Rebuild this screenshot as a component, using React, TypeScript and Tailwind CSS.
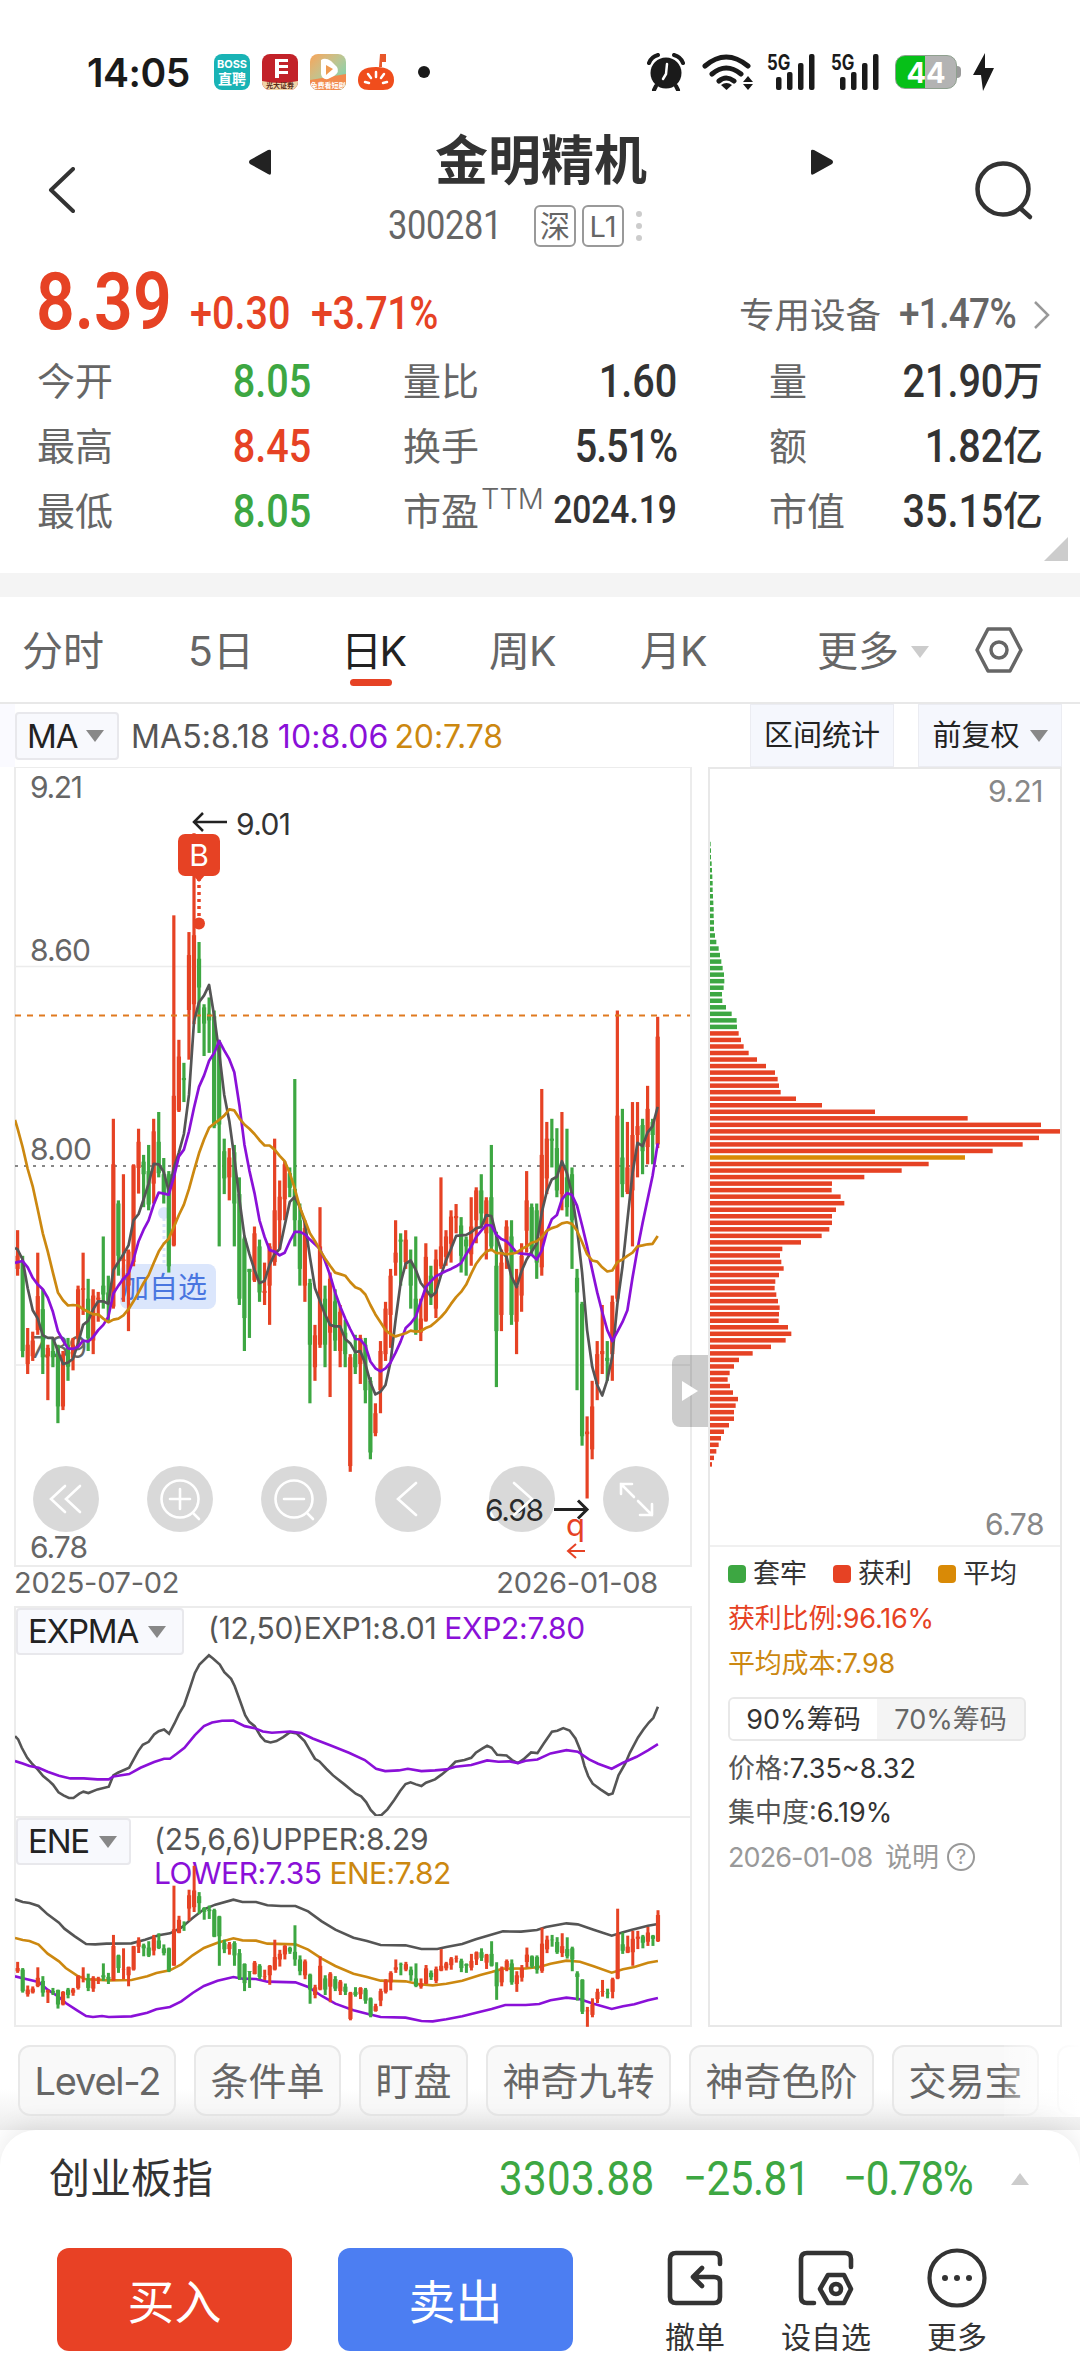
import type { ReactNode } from "react";

const RED = "#e64224";
const GREEN = "#3da742";
const GOLD = "#cc8810";
const PURPLE = "#8a10d8";
const DARK = "#555555";

// [high, low, body top, body bottom, rising]
const candles: number[][] = [
  [899, 986, 948, 973, 1], [948, 1142, 960, 1130, 0], [1086, 1174, 1118, 1155, 1], [1093, 1149, 1110, 1140, 1],
  [942, 1099, 1025, 1090, 1], [1012, 1174, 1050, 1142, 0], [1118, 1224, 1124, 1140, 1], [1105, 1161, 1130, 1142, 0],
  [1118, 1268, 1122, 1236, 0], [1130, 1243, 1137, 1236, 1], [1105, 1187, 1118, 1160, 0], [1105, 1167, 1118, 1143, 1],
  [1005, 1118, 1012, 1105, 1], [942, 1061, 1010, 1013, 1], [992, 1130, 1030, 1105, 0], [1012, 1136, 1024, 1110, 1],
  [1017, 1074, 1028, 1032, 1], [911, 1049, 1005, 1022, 0], [986, 1074, 1018, 1040, 0], [686, 1049, 773, 1045, 1],
  [842, 986, 848, 948, 0], [792, 1036, 955, 958, 1], [936, 1092, 940, 1005, 1], [773, 968, 775, 960, 1],
  [705, 829, 730, 780, 1], [755, 855, 768, 792, 0], [736, 861, 786, 850, 0], [686, 848, 710, 810, 1],
  [673, 798, 730, 790, 0], [761, 848, 792, 830, 0], [786, 980, 792, 968, 0], [297, 930, 642, 928, 1],
  [535, 673, 567, 670, 1], [579, 654, 608, 612, 0], [329, 573, 373, 478, 1], [140, 505, 335, 467, 1],
  [348, 522, 380, 435, 0], [467, 566, 473, 504, 0], [454, 560, 485, 498, 0], [479, 704, 490, 700, 0],
  [535, 930, 540, 697, 0], [724, 830, 748, 800, 0], [742, 842, 760, 798, 1], [736, 930, 750, 848, 0],
  [798, 1042, 830, 1030, 0], [911, 1130, 915, 1067, 0], [973, 1105, 973, 979, 0], [892, 998, 905, 995, 1],
  [917, 1036, 930, 1018, 0], [961, 1042, 1015, 1019, 1], [924, 1080, 930, 1005, 1], [724, 967, 861, 960, 1],
  [804, 936, 835, 880, 1], [767, 880, 773, 840, 1], [779, 836, 790, 818, 0], [610, 930, 820, 880, 0],
  [848, 1005, 880, 973, 0], [880, 1036, 895, 1005, 1], [992, 1230, 1000, 1118, 0], [1080, 1187, 1100, 1161, 1],
  [855, 1124, 930, 1118, 1], [1005, 1161, 1030, 1118, 0], [980, 1218, 992, 1095, 1], [1012, 1130, 1035, 1110, 0],
  [1042, 1161, 1055, 1130, 1], [1070, 1161, 1095, 1136, 0], [1136, 1361, 1142, 1350, 1], [1099, 1174, 1136, 1161, 0],
  [1099, 1193, 1105, 1155, 1], [1105, 1230, 1118, 1205, 0], [1180, 1337, 1187, 1324, 0], [1230, 1293, 1249, 1287, 1],
  [1111, 1249, 1130, 1205, 1], [1036, 1149, 1049, 1136, 1], [973, 1124, 986, 1061, 1], [880, 986, 942, 961, 1],
  [905, 1005, 917, 921, 0], [899, 973, 917, 960, 1], [936, 1049, 961, 1005, 0], [911, 1099, 1030, 1090, 0],
  [1030, 1111, 1068, 1095, 1], [924, 1074, 950, 1072, 1], [967, 1042, 986, 1020, 0], [936, 1067, 955, 1049, 1],
  [798, 973, 930, 968, 1], [899, 967, 911, 950, 1], [861, 961, 873, 925, 1], [849, 905, 872, 876, 1],
  [874, 980, 890, 948, 0], [911, 986, 917, 930, 0], [836, 967, 892, 945, 1], [817, 924, 823, 880, 1],
  [792, 892, 823, 867, 0], [836, 955, 842, 905, 1], [736, 936, 836, 930, 0], [902, 1199, 967, 1092, 0],
  [936, 1092, 961, 1061, 1], [880, 973, 892, 940, 1], [880, 1080, 911, 1061, 0], [973, 1136, 1005, 1074, 1],
  [924, 1055, 948, 1024, 1], [786, 942, 842, 900, 1], [848, 948, 855, 935, 0], [848, 992, 861, 961, 0],
  [629, 986, 755, 970, 1], [692, 830, 724, 800, 1], [686, 779, 724, 728, 0], [704, 836, 742, 823, 0],
  [673, 861, 775, 830, 1], [705, 873, 798, 855, 0], [779, 973, 792, 880, 0], [973, 1205, 990, 1018, 0],
  [1036, 1311, 1040, 1293, 0], [1255, 1412, 1284, 1289, 1], [1187, 1337, 1236, 1318, 1], [1111, 1224, 1136, 1193, 1],
  [1042, 1174, 1130, 1136, 1], [1111, 1187, 1143, 1149, 0], [1024, 1187, 1036, 1136, 1], [479, 1036, 680, 1030, 1],
  [667, 836, 760, 811, 0], [692, 830, 779, 826, 1], [654, 930, 717, 823, 1], [654, 798, 700, 717, 1],
  [686, 792, 698, 748, 0], [623, 773, 667, 740, 1], [686, 773, 692, 717, 0], [491, 742, 529, 735, 1],
];

const ma5 = [
  936, 955, 1010, 1052, 1068, 1100, 1105, 1105, 1130, 1155, 1152, 1145, 1115, 1080, 1072, 1050, 1035, 1035, 1040, 975,
  960, 945, 928, 880, 868, 840, 810, 772, 773, 788, 825, 780, 750, 715, 640, 500, 463, 450, 430, 490,
  560, 640, 690, 760, 840, 910, 945, 975, 1000, 996, 965, 945, 935, 890, 845, 835, 855, 885, 950, 1010,
  1035, 1060, 1080, 1083, 1083, 1107, 1115, 1132, 1130, 1155, 1190, 1213, 1208, 1195, 1150, 1070, 1000, 963, 957, 975,
  1000, 1012, 1026, 1018, 985, 957, 935, 910, 909, 908, 903, 895, 893, 870, 872, 910, 940, 950, 988, 1008,
  977, 955, 940, 925, 865, 825, 802, 797, 767, 790, 830, 895, 980, 1090, 1160, 1195, 1215, 1185, 1140, 1040,
  970, 880, 790, 732, 738, 712, 700, 663,
];

const ma10 = [
  960, 958, 970, 990, 1003, 1012, 1028, 1055, 1092, 1110, 1125, 1126, 1122, 1110, 1112, 1103, 1090, 1080, 1065, 1020,
  1005, 992, 982, 955, 920, 898, 880, 850, 827, 829, 831, 798, 758, 745, 710, 665, 625, 603, 575, 560,
  537, 555, 572, 597, 660, 735, 785, 828, 880, 912, 937, 940, 947, 942, 920, 902, 902, 907, 917, 926,
  935, 958, 985, 1018, 1045, 1068, 1088, 1107, 1108, 1120, 1150, 1163, 1169, 1163, 1152, 1133, 1112, 1086, 1077, 1064,
  1036, 1008, 997, 987, 982, 977, 973, 968, 962, 945, 930, 912, 900, 889, 890, 908, 916, 920, 930, 942,
  944, 945, 946, 955, 938, 902, 878, 870, 840, 828, 832, 852, 890, 930, 975, 1018, 1055, 1090, 1111, 1093,
  1075, 1052, 990, 935, 885, 840, 795, 733,
];

const ma20 = [
  705, 740, 782, 815, 860, 905, 940, 980, 1018, 1033, 1043, 1042, 1043, 1050, 1055, 1060, 1060, 1068, 1075, 1070,
  1068, 1062, 1050, 1035, 1018, 1000, 985, 962, 940, 925, 915, 893, 870, 850, 820, 785, 752, 725, 703, 695,
  688, 680, 668, 670, 685, 697, 705, 715, 727, 737, 737, 745, 757, 767, 790, 820, 855, 880, 905, 920,
  937, 953, 967, 980, 983, 986, 998, 1008, 1012, 1022, 1042, 1060, 1075, 1090, 1098, 1102, 1099, 1096, 1091, 1093,
  1092, 1086, 1082, 1074, 1065, 1054, 1040, 1027, 1017, 1003, 982, 963, 950, 940, 936, 943, 943, 945, 944, 942,
  935, 930, 923, 920, 912, 900, 895, 892, 886, 884, 887, 900, 922, 945, 957, 959, 970, 978, 976, 960,
  955, 948, 942, 930, 928, 926, 925, 910,
];

// cost distribution, one width per price level
const chips = [
  2, 3, 3, 5, 6, 7, 8, 8, 9, 10, 11, 11, 12, 12, 15, 19, 26, 30, 34, 38, 42, 43, 41, 36, 37, 48, 65, 80, 81,
  86, 93, 101, 116, 141, 168, 195, 203, 207, 212, 258, 336, 495, 773, 993, 1050, 987, 938, 848, 765, 656, 575, 463,
  366, 365, 392, 403, 378, 366, 366, 358, 335, 273, 217, 210, 214, 221, 207, 196, 194, 199, 204, 209, 207, 206,
  234, 244, 227, 183, 128, 87, 72, 59, 53, 60, 69, 84, 77, 72, 72, 57, 42, 33, 26, 19, 12, 6,
];
const AVG_ROW = 48;
const FIRST_PROFIT_ROW = 29;

const exp1 =
  "33,530 40,540 48,565 60,595 70,612 83,630 95,650 107,663 117,676 129,699 140,708 152,716 162,716 175,703 184,697 195,701 215,690 240,682 250,648 260,640 285,625 305,575 315,556 328,547 340,525 350,515 362,510 373,523 385,492 395,463 406,438 418,390 430,340 440,315 461,287 470,297 485,315 495,338 510,358 518,380 530,425 541,467 550,487 562,500 575,530 585,545 597,549 610,545 625,533 640,518 655,522 672,545 685,575 695,598 705,606 720,628 735,648 760,675 785,703 797,711 808,728 818,752 830,769 842,767 855,750 870,722 883,695 895,674 906,669 918,675 930,680 940,670 960,660 975,645 990,628 1005,607 1025,602 1040,595 1050,580 1065,567 1075,559 1085,565 1097,586 1118,588 1130,602 1143,611 1155,600 1172,579 1186,581 1200,552 1218,517 1230,514 1243,506 1257,513 1270,537 1280,570 1290,620 1298,650 1308,673 1325,690 1343,706 1352,702 1365,648 1380,612 1390,580 1408,534 1420,510 1432,489 1442,475 1452,442";
const exp2 =
  "33,605 50,612 65,620 85,625 105,637 130,649 155,657 185,657 215,660 240,660 250,651 285,644 310,625 340,608 362,598 375,598 390,583 407,565 430,527 450,500 468,489 490,484 515,483 540,500 562,506 580,516 600,520 640,516 665,521 690,537 730,558 770,580 805,602 830,628 850,635 880,633 900,628 930,635 960,633 985,630 1005,622 1040,617 1075,603 1100,607 1125,606 1143,611 1160,604 1186,600 1215,582 1250,572 1275,577 1300,600 1320,613 1350,628 1375,610 1405,592 1430,573 1452,554";
const upper =
  "33,267 50,275 65,278 85,287 105,312 130,337 142,355 165,378 190,401 210,402 235,400 290,399 320,388 350,375 375,369 400,352 425,323 450,297 475,283 515,268 535,275 565,275 590,285 620,287 652,287 680,303 710,333 740,358 780,382 810,392 840,404 895,405 930,416 965,416 985,410 1020,401 1050,387 1080,375 1110,363 1150,364 1185,359 1205,350 1250,339 1275,342 1310,358 1350,376 1375,366 1395,358 1430,346 1452,341";
const middle =
  "33,383 50,389 65,392 85,403 105,430 130,453 145,473 170,496 190,507 210,508 240,510 290,509 325,498 345,488 375,480 400,462 425,435 450,413 480,397 515,384 535,390 565,391 590,400 652,402 680,418 710,445 740,467 780,490 810,500 840,511 895,513 925,522 955,525 985,520 1020,511 1060,494 1085,485 1110,475 1160,474 1190,470 1215,460 1250,451 1280,454 1310,468 1350,487 1375,477 1400,470 1430,457 1452,452";
const lower =
  "33,498 50,504 85,515 105,538 130,560 145,578 170,600 190,617 205,620 225,617 240,620 290,618 325,607 345,597 375,590 400,573 425,548 450,527 480,511 515,500 535,505 565,506 590,514 652,516 680,530 710,557 740,580 780,600 810,610 840,620 895,622 930,632 955,633 985,627 1020,618 1060,604 1085,596 1115,584 1160,584 1190,581 1215,570 1250,562 1280,567 1310,580 1350,596 1375,588 1400,582 1430,570 1452,563";

const cx = (i: number) => 17.6 + 5.04 * i;
const cy = (v: number) => 760 + v / 1.912;
const line = (values: number[]) => values.map((v, i) => `${cx(i).toFixed(1)},${cy(v).toFixed(1)}`).join(" ");

function Num({ children, className = "" }: { children: ReactNode; className?: string }) {
  return (
    <span className={`inline-block whitespace-nowrap font-['Roboto'] leading-none scale-x-[.86] ${className}`}>
      {children}
    </span>
  );
}

function Caret({ className = "" }: { className?: string }) {
  return (
    <svg viewBox="0 0 18 12" className={`h-3 w-[18px] shrink-0 ${className}`} fill="currentColor">
      <path d="M0 0h18L9 12z" />
    </svg>
  );
}

function Signal() {
  return (
    <div className="relative h-9 w-12">
      <span className="absolute top-0 left-0 text-[21px] leading-[17px] font-bold scale-x-[.8] origin-left">5G</span>
      <svg viewBox="0 0 48 36" className="absolute inset-0" fill="#1a1a1a">
        <rect x="9" y="23" width="5.500" height="13" rx="2" />
        <rect x="20" y="18" width="5.500" height="18" rx="2" />
        <rect x="31" y="9" width="5.500" height="27" rx="2" />
        <rect x="42" y="0" width="5.500" height="36" rx="2" />
      </svg>
    </div>
  );
}

function StatusBar() {
  return (
    <div className="flex h-[126px] items-center pt-[18px] pl-[87px] pr-[86px] text-[#1a1a1a]">
      <span className="w-[127px] text-[39px] font-semibold leading-none tracking-[-0.5px]">14:05</span>
      <div className="flex items-center gap-3">
        <div className="flex size-9 flex-col items-center justify-center rounded-lg bg-[#19b3b5] text-white">
          <span className="text-[11px] leading-[13px] font-bold">BOSS</span>
          <span className="text-[14px] leading-[15px] font-bold">直聘</span>
        </div>
        <div className="relative size-9 overflow-hidden rounded-lg bg-[#c22229]">
          <svg viewBox="0 0 36 36">
            <path d="M13 5h13v3H17v3h9v3h-9v3h9v3h-9v4h-4z" fill="#fff" />
            <path d="M0 27q18 4 36 0v9H0z" fill="#f0d4a8" />
          </svg>
          <span className="absolute inset-x-0 bottom-0 text-center text-[7px] leading-[8px] font-bold text-[#5a2a18]">光大证券</span>
        </div>
        <div className="relative size-9 overflow-hidden rounded-lg bg-linear-to-br from-[#f7a458] via-[#b8c795] to-[#4fd6b8]">
          <svg viewBox="0 0 36 36">
            <path d="M0 26l36-6v16H0z" fill="#f28a4c" />
            <path d="M11 6q4-3 10 1l6 6q3 5-3 9l-6 3q-6 1-7-5z" fill="#fff" />
            <path d="M16 11l7 4-7 6z" fill="#f09a50" />
          </svg>
          <span className="absolute inset-x-0 bottom-0 text-center text-[7px] leading-[8px] font-bold text-white">免费看短剧</span>
        </div>
        <svg viewBox="0 0 36 36" className="size-9">
          <path d="M22 0h6v8h-4v5h-3z" fill="#e8572a" />
          <path d="M0 26q0-13 18-13t18 13q0 10-11 10H11Q0 36 0 26z" fill="#f04d1c" />
          <path d="M11 29l-4-1M13 24l-3-4M18 23v-5M23 24l3-4M25 29l4-1" stroke="#fff" strokeWidth="2.5" strokeLinecap="round" />
        </svg>
      </div>
      <span className="ml-6 size-3 rounded-full bg-[#1a1a1a]" />
      <div className="ml-auto flex items-center">
        <svg viewBox="0 0 38 38" className="h-[38px] w-[38px]">
          <circle cx="19" cy="20" r="15.5" fill="#1a1a1a" />
          <path d="M2 10q2-6 9-8M36 10q-2-6-9-8M9 33l-2 4M29 33l2 4" stroke="#1a1a1a" strokeWidth="4" strokeLinecap="round" fill="none" />
          <path d="M20 11l-1 10-3 5" stroke="#fff" strokeWidth="2.5" strokeLinecap="round" fill="none" />
        </svg>
        <svg viewBox="0 0 51 36" className="ml-[17px] h-9 w-[51px]" fill="none" stroke="#1a1a1a" strokeWidth="5" strokeLinecap="round">
          <path d="M3 12q21-18 43 0M10 20q14-12 29 0M17 27q7-6 15 0" />
          <path d="M19 31l5.500 5 5.500-5q-5.500-4-11 0z" fill="#1a1a1a" stroke="none" />
          <path d="M41 28l5-6 5 6zM41 30l5 6 5-6z" fill="#1a1a1a" stroke="none" />
        </svg>
        <div className="ml-[14px]"><Signal /></div>
        <div className="ml-4"><Signal /></div>
        <div className="relative ml-4 h-[34px] w-[66px]">
          <div className="flex h-[34px] w-[62px] items-center justify-center rounded-[10px] border border-[#8fa08f] bg-linear-to-r from-[#06c018] from-48% to-[#b3b3b3] to-48% text-[29px] font-bold leading-none text-white">
            44
          </div>
          <span className="absolute top-[11px] right-0 h-3 w-1 rounded-r bg-[#9a9a9a]" />
        </div>
        <svg viewBox="0 0 21 38" className="ml-3 h-[38px] w-[21px]" fill="#1a1a1a">
          <path d="M12 0L0 22h8l2 16 11-23h-9z" />
        </svg>
      </div>
    </div>
  );
}

function Header() {
  return (
    <div className="flex h-[138px] items-start px-12 text-[#333]">
      <svg viewBox="0 0 27 46" className="mt-[41px] h-[46px] w-[27px]" fill="none" stroke="#333" strokeWidth="4" strokeLinecap="round" strokeLinejoin="round">
        <path d="M25 2L3 23l22 21" />
      </svg>
      <svg viewBox="0 0 22 26" className="mt-[23px] ml-[174px] h-[26px] w-[22px]" fill="#222">
        <path d="M22 2v22q0 3-3 1L1 15q-2-2 0-4L19 1q3-1 3 1z" />
      </svg>
      <div className="flex flex-1 flex-col items-center">
        <h1 className="mt-[7px] text-[53px] leading-[56px] font-bold">金明精机</h1>
        <div className="mt-4 flex items-center pr-[52px] text-[#666]">
          <Num className="w-[126px] origin-left text-[40px] tracking-[-0.4px]">300281</Num>
          <span className="ml-5 flex size-[42px] items-center justify-center rounded-md border-2 border-[#999] text-[30px] leading-none">深</span>
          <span className="ml-1.5 flex size-[42px] items-center justify-center rounded-md border-2 border-[#999] text-[29px] leading-none">L1</span>
          <span className="ml-3 flex flex-col gap-1.5">
            <i className="size-1.5 rounded-full bg-[#ccc]" />
            <i className="size-1.5 rounded-full bg-[#ccc]" />
            <i className="size-1.5 rounded-full bg-[#ccc]" />
          </span>
        </div>
      </div>
      <svg viewBox="0 0 22 26" className="mt-[23px] mr-[141px] h-[26px] w-[22px]" fill="#222">
        <path d="M0 2v22q0 3 3 1l18-10q2-2 0-4L3 1Q0 0 0 2z" />
      </svg>
      <svg viewBox="0 0 60 60" className="-mr-0.5 mt-[35px] size-[60px]" fill="none" stroke="#333" strokeWidth="4.500">
        <circle cx="29" cy="28" r="25.500" />
        <path d="M46 47l10 9" strokeLinecap="round" />
      </svg>
    </div>
  );
}

const stats = [
  [["今开", "8.05", "", "text-[#3da742]"], ["量比", "1.60", "", ""], ["量", "21.90", "万", ""]],
  [["最高", "8.45", "", "text-[#e64224]"], ["换手", "5.51%", "", "tracking-[-1.2px]"], ["额", "1.82", "亿", ""]],
  [["最低", "8.05", "", "text-[#3da742]"], ["市盈", "2024.19", "", ""], ["市值", "35.15", "亿", ""]],
];

function Quote() {
  return (
    <div className="relative h-[309px] text-[#333]">
      <div className="flex h-[84px] items-end pl-9 pr-[30px] pb-1.5 text-[#e64224]">
        <Num className="w-[154px] origin-left text-[79px] font-semibold">8.39</Num>
        <Num className="mb-1.5 w-[121px] origin-left text-[46px] font-medium">+0.30</Num>
        <Num className="mb-1.5 origin-left text-[46px] font-medium tracking-[-0.5px]">+3.71%</Num>
        <span className="mb-[9px] ml-auto text-[35.500px] leading-none text-[#666]">专用设备</span>
        <Num className="mb-[7px] ml-[18px] w-[135px] origin-left text-[43px] font-medium tracking-[-0.8px] text-[#666]">+1.47%</Num>
        <svg viewBox="0 0 16 28" className="mb-[13px] h-7 w-4" fill="none" stroke="#999" strokeWidth="2.5">
          <path d="M1 1l13 13L1 27" />
        </svg>
      </div>
      <div>
        {stats.map((row) => (
          <div key={row[0][0]} className="flex h-[65px] items-center gap-[92px] px-[37px]">
            {row.map(([label, value, unit, color]) => (
              <div key={label} className="flex h-full flex-1 items-center justify-between">
                <span className="relative text-[38px] leading-none text-[#666]">
                  {label}
                  {label === "市盈" && <sup className="absolute -top-2 left-[78px] text-[29px] leading-none font-light">TTM</sup>}
                </span>
                <span className={`flex items-center ${color}`}>
                  <Num className={label === "市盈" ? "origin-right text-[39px] font-medium" : "origin-right text-[46px] font-medium"}>{value}</Num>
                  {unit && <span className="text-[40px] leading-none font-medium">{unit}</span>}
                </span>
              </div>
            ))}
          </div>
        ))}
      </div>
      <svg viewBox="0 0 24 24" className="absolute right-3 bottom-[12px] size-6" fill="#ccc">
        <path d="M24 0v24H0z" />
      </svg>
    </div>
  );
}

function Tabs() {
  return (
    <div className="flex h-[107px] items-center border-b-2 border-[#e8e8e8] pt-1 pl-[22px] text-[41px] leading-none text-[#666]">
      <span className="w-[166px]">分时</span>
      <span className="w-[153px]">5日</span>
      <span className="relative w-[148px] tracking-[-2.5px] text-[#222]">
        日K
        <i className="absolute -bottom-[14px] left-[9px] h-[7px] w-[42px] rounded-full bg-[#e64224]" />
      </span>
      <span className="w-[151px] tracking-[-1px]">周K</span>
      <span className="w-[177px] tracking-[-1px]">月K</span>
      <span>更多</span>
      <Caret className="ml-3 text-[#ccc]" />
      <svg viewBox="0 0 48 46" className="mb-1 ml-[46px] h-[46px] w-12" fill="none" stroke="#666" strokeWidth="3.500" strokeLinejoin="round">
        <path d="M13 2h22l11 21-11 21H13L2 23z" />
        <circle cx="24" cy="23" r="8" />
      </svg>
    </div>
  );
}

function MaBar() {
  return (
    <div className="flex h-[63px] shrink-0 items-start text-[31px] leading-none">
      <i className="h-full w-[15px] bg-[#fafaff]" />
      <div className="mt-2 flex h-12 w-[104px] items-center rounded border-2 border-[#e8e8ec] bg-[#f8f9fd] pl-2.5 text-[33px] tracking-[-1px] text-[#222]">
        MA
        <Caret className="ml-2 text-[#888]" />
      </div>
      <div className="ml-3 flex gap-2 pt-[17px] text-[32px] tracking-[0.1px]">
        <span className="text-[#555]">MA5:8.18</span>
        <span className="text-[#8a10d8]">10:8.06</span>
        <span className="-ml-0.5 tracking-[-0.1px] text-[#cc8810]">20:7.78</span>
      </div>
      <div className="mr-[18px] ml-auto flex h-full gap-6 text-[29px] text-[#222]">
        <div className="flex w-[144px] items-center justify-center border border-[#ebecf2] bg-[#f5f7fd]">区间统计</div>
        <div className="flex w-[144px] items-center justify-center gap-2.5 border border-[#ebecf2] bg-[#f5f7fd]">
          前复权
          <Caret className="text-[#888]" />
        </div>
      </div>
    </div>
  );
}

function MainChart() {
  return (
    <svg viewBox="15 767 676 799" className="-mt-px -ml-px block h-[799px] w-[676px] font-['Inter','Noto_Sans_CJK_SC',sans-serif]">
      <path d="M15 966.500h675M15 1365h675" stroke="#ececec" strokeWidth="1.500" />
      <path d="M15 1166h675" stroke="#888" strokeWidth="2" strokeDasharray="3 6" />
      <g fill="#666" fontSize="30">
        <text x="30" y="797.500" textLength="53">9.21</text>
        <text x="30" y="960.500" textLength="61">8.60</text>
        <text x="30" y="1159.500" textLength="62">8.00</text>
        <text x="30" y="1358" textLength="57">7.39</text>
        <text x="30" y="1558" textLength="58">6.78</text>
      </g>
      <rect x="120" y="1264" width="96" height="45" rx="8" fill="#dbe6fc" />
      <text x="120" y="1298" fontSize="29" fill="#4a76e0">加自选</text>
      <circle cx="164" cy="1213" r="6" fill="#dbe6fc" />
      <path d="M164 1218v46" stroke="#dbe6fc" strokeWidth="3" strokeDasharray="3 3" />
      {candles.map(([high, low, top, bottom, up], i) => (
        <g key={i} fill={up ? RED : GREEN}>
          <rect x={cx(i) - 1.6} y={cy(high)} width="3.2" height={(low - high) / 1.912} />
          <rect x={cx(i) - 2.1} y={cy(top)} width="4.2" height={(bottom - top) / 1.912} />
        </g>
      ))}
      <path d="M15 1015.500h675" stroke="#e07a20" strokeWidth="2" strokeDasharray="6 6" />
      <g fill="none" strokeWidth="2.700" strokeLinejoin="round">
        <polyline points={`15,1248 ${line(ma5)}`} stroke={DARK} />
        <polyline points={`15,1263 ${line(ma10)}`} stroke={PURPLE} />
        <polyline points={`15,1120 ${line(ma20)}`} stroke={GOLD} />
      </g>
      <g fontSize="30" fill="#333">
        <text x="236" y="834.500" textLength="55">9.01</text>
        <path d="M227 822h-33m9-9l-9 9 9 9" stroke="#222" strokeWidth="2.500" fill="none" />
      </g>
      <path d="M199 878v40" stroke={RED} strokeWidth="3.500" strokeDasharray="3 4" />
      <circle cx="199" cy="923.500" r="6" fill={RED} />
      <path d="M192 874h14l-7 8z" fill={RED} />
      <rect x="178" y="834" width="42" height="42" rx="7" fill={RED} />
      <text x="199" y="866" fontSize="30" fill="#fff" textAnchor="middle">B</text>

      <text x="485" y="1521" fontSize="30" fill="#333" textLength="59">6.98</text>
      <path d="M554 1509.500h33m-9-9l9 9-9 9" stroke="#222" strokeWidth="3" fill="none" />
      <text x="566" y="1536" fontSize="31" fill={RED}>q</text>
      <path d="M585 1551h-17m8-7l-8 7 8 7" stroke={RED} strokeWidth="2" fill="none" />

      <g fill="#000" fillOpacity=".15">
        {[66, 180, 294, 408, 522, 636].map((x) => (
          <circle key={x} cx={x} cy="1499" r="33" />
        ))}
      </g>
      <g fill="none" stroke="#fff" strokeWidth="2.600" strokeLinecap="round">
        <path d="M65 1486l-14 13 14 13M80 1486l-14 13 14 13" />
        <circle cx="180" cy="1499" r="18.500" />
        <path d="M170 1499h20M180 1489v20M193 1513l6 6" />
        <circle cx="294" cy="1499" r="18.500" />
        <path d="M284 1499h20M307 1513l6 6" />
        <path d="M416 1483l-18 16 18 16M514 1483l18 16-18 16" />
        <path d="M634 1497l-13-13m0 10v-10h11M638 1501l14 14m0-11v11h-12" />
      </g>
    </svg>
  );
}

function IndicatorName({ name, className }: { name: string; className: string }) {
  return (
    <div className={`absolute top-0 left-0 flex h-[47px] items-center gap-2.5 rounded border-2 border-[#e8e8ec] bg-[#f8f9fd] pl-2.5 text-[33px] leading-none tracking-[-1.2px] text-[#222] ${className}`}>
      {name}
      <Caret className="text-[#888]" />
    </div>
  );
}

function LeftCharts() {
  return (
    <div className="w-[678px] shrink-0">
      <div className="h-[800px] border-2 border-t border-[#ececec]">
        <MainChart />
      </div>
      <div className="flex h-[39px] justify-between pt-px pr-[34px] text-[29px] leading-[29px] tracking-[-0.3px] text-[#666]">
        <span>2025-07-02</span>
        <span>2026-01-08</span>
      </div>
      <div className="relative h-[210px] border-2 border-b-0 border-[#ececec]">
        <svg viewBox="33 142 1492 628" preserveAspectRatio="none" className="-mt-px -ml-px block h-[209px] w-[676px]" fill="none" strokeWidth="2.600">
          <polyline points={exp1} stroke={DARK} vectorEffect="non-scaling-stroke" />
          <polyline points={exp2} stroke={PURPLE} vectorEffect="non-scaling-stroke" />
        </svg>
        <IndicatorName name="EXPMA" className="w-[168px]" />
        <div className="absolute top-[5px] left-[192px] flex gap-2 whitespace-nowrap text-[30px] leading-none tracking-[-0.3px]">
          <span className="text-[#555]">(12,50)EXP1:8.01</span>
          <span className="text-[#8a10d8]">EXP2:7.80</span>
        </div>
      </div>
      <div className="relative h-[211px] border-2 border-[#ececec]">
        <IndicatorName name="ENE" className="w-[115px]" />
        <div className="absolute top-1 left-[138px] whitespace-nowrap text-[30px] leading-[34px] tracking-[-0.5px]">
          <div className="tracking-[-0.3px] text-[#555]">(25,6,6)UPPER:8.29</div>
          <div className="flex gap-2">
            <span className="text-[#8a10d8]">LOWER:7.35</span>
            <span className="text-[#cc8810]">ENE:7.82</span>
          </div>
        </div>
        <svg viewBox="33 20 1492 630" preserveAspectRatio="none" className="relative -mt-px -ml-px block h-[210px] w-[676px]">
          <g fill="none" strokeWidth="2.600">
            <polyline points={upper} stroke={DARK} vectorEffect="non-scaling-stroke" />
            <polyline points={middle} stroke={GOLD} vectorEffect="non-scaling-stroke" />
            <polyline points={lower} stroke={PURPLE} vectorEffect="non-scaling-stroke" />
          </g>
          {candles.map(([high, low, top, bottom, up], i) => {
            const y = (v: number) => 226 + (v - 297) * 0.3797;
            const x = cx(i) * 2.208;
            return (
              <g key={i} fill={up ? RED : GREEN}>
                <rect x={x - 3.3} y={y(high)} width="6.6" height={y(low) - y(high)} />
                <rect x={x - 4.6} y={y(top)} width="9.2" height={y(bottom) - y(top)} />
              </g>
            );
          })}
        </svg>
      </div>
    </div>
  );
}

function CostPanel() {
  return (
    <div className="w-[354px] shrink-0 border-2 border-[#e8e8e8] text-[27px] leading-none">
      <div className="relative h-[778px] border-b-2 border-[#f0f0f0]">
        <svg viewBox="710 769 350 776" className="block h-[776px] w-[350px]">
          {chips.map((w, i) => (
            <rect
              key={i}
              x="710"
              y={841.8 + i * 6.53}
              width={w / 3}
              height="4.5"
              fill={i === AVG_ROW ? "#d98a06" : i < FIRST_PROFIT_ROW ? GREEN : RED}
            />
          ))}
        </svg>
        <span className="absolute top-[7px] right-[17px] text-[30px] tracking-[-0.5px] text-[#888]">9.21</span>
        <span className="absolute right-[16px] bottom-[6px] text-[30px] tracking-[-0.5px] text-[#888]">6.78</span>
      </div>
      <div className="px-[18px] text-[#333]">
        <div className="mt-[13px] flex h-[27px] items-center">
          <i className="mr-[7px] size-[18px] rounded bg-[#3da742]" />
          <span className="w-[80px]">套牢</span>
          <i className="mr-[7px] size-[18px] rounded bg-[#e64224]" />
          <span className="w-[80px]">获利</span>
          <i className="mr-[7px] size-[18px] rounded bg-[#d98a06]" />
          <span>平均</span>
        </div>
        <div className="mt-[18px] tracking-[-0.2px] text-[#e64224]">获利比例:96.16%</div>
        <div className="mt-[18px] tracking-[-0.2px] text-[#cc8810]">平均成本:7.98</div>
        <div className="mt-[20px] flex h-11 w-[298px] items-center rounded-md border-2 border-[#e8e8e8] bg-[#f4f4f4]">
          <span className="flex h-full flex-1 items-center justify-center rounded-l bg-white">90%筹码</span>
          <span className="flex h-full flex-1 items-center justify-center text-[#666]">70%筹码</span>
        </div>
        <div className="mt-[14px]"><span className="text-[#555]">价格:</span>7.35~8.32</div>
        <div className="mt-[17px]"><span className="text-[#555]">集中度:</span>6.19%</div>
        <div className="mt-[17px] flex items-center text-[#999]">
          <span className="w-[157px] tracking-[-0.9px]">2026-01-08</span>
          <span>说明</span>
          <span className="ml-2 flex size-7 items-center justify-center rounded-full border-2 border-[#999] text-[20px]">?</span>
        </div>
      </div>
    </div>
  );
}

const tools = ["Level-2", "条件单", "盯盘", "神奇九转", "神奇色阶", "交易宝"];

function ToolRow() {
  return (
    <div className="relative h-[103px] overflow-hidden bg-linear-to-b from-white from-60% to-[#ededed]">
      <div className="flex gap-[18px] pt-[18px] pl-[18px] text-[38px] leading-none text-[#666]">
        {tools.map((t) => (
          <span key={t} className="flex h-[71px] shrink-0 items-center rounded-xl border-2 border-[#e8e8e8] bg-[#f7f7f7]/80 px-[14.500px]">
            {t === "Level-2" ? <span className="inline-block w-[125px] tracking-[-1.2px] whitespace-nowrap">{t}</span> : t}
          </span>
        ))}
        <span className="h-[71px] w-16 shrink-0 rounded-xl border-2 border-[#e8e8e8]" />
      </div>
      <i className="absolute top-0 right-0 h-[90px] w-[76px] bg-linear-to-r from-white/20 to-white" />
    </div>
  );
}

function BottomBar() {
  return (
    <div className="relative h-[243px] rounded-t-[36px] bg-white shadow-[0_-6px_24px_rgba(0,0,0,0.08)]">
      <div className="flex h-[97px] items-center pl-[49px] text-[#3da742]">
        <span className="w-[450px] text-[41px] leading-none text-[#333]">创业板指</span>
        <Num className="w-[184px] origin-left text-[49px] tracking-[0.4px]">3303.88</Num>
        <Num className="w-[160px] origin-left text-[49px] tracking-[-0.6px]">−25.81</Num>
        <Num className="w-[166px] origin-left text-[49px] tracking-[-1.5px]">−0.78%</Num>
        <Caret className="h-3 w-[22px] rotate-180 text-[#ccc]" />
      </div>
      <div className="flex pt-[21px] pl-[57px] text-[30px] leading-none text-[#333]">
        <button className="h-[103px] w-[235px] rounded-xl bg-[#e84125] pt-1 text-[47px] text-white">买入</button>
        <button className="ml-[46px] h-[103px] w-[235px] rounded-xl bg-[#4c7ef2] pt-1 text-[47px] text-white">卖出</button>
        <div className="ml-[72px] flex w-[100px] flex-col items-center">
          <svg viewBox="0 0 60 60" className="size-[60px]" fill="none" stroke="#333" strokeWidth="4.600" strokeLinecap="round" strokeLinejoin="round">
            <path d="M55 16v-5q0-6-6-6H11q-6 0-6 6v38q0 6 6 6h38q6 0 6-6V34q0-5-6-5H28M37 20l-9 9 9 9" />
          </svg>
          <span className="mt-[14px]">撤单</span>
        </div>
        <div className="ml-[31px] flex w-[100px] flex-col items-center">
          <svg viewBox="0 0 60 60" className="size-[60px]" fill="none" stroke="#333" strokeWidth="4.600" strokeLinecap="round" strokeLinejoin="round">
            <path d="M55 19v-8q0-6-6-6H11q-6 0-6 6v38q0 6 6 6h7" />
            <path d="M32 27h16l7 14-7 14H32l-8-14z" />
            <circle cx="40" cy="41" r="5" />
          </svg>
          <span className="mt-[14px]">设自选</span>
        </div>
        <div className="ml-[31px] flex w-[100px] flex-col items-center">
          <svg viewBox="0 0 60 60" className="size-[60px]" fill="none" stroke="#333" strokeWidth="4.200">
            <circle cx="30" cy="30" r="27.500" />
            <g fill="#333" stroke="none">
              <circle cx="18" cy="30" r="3" />
              <circle cx="30" cy="30" r="3" />
              <circle cx="42" cy="30" r="3" />
            </g>
          </svg>
          <span className="mt-[14px]">更多</span>
        </div>
      </div>
    </div>
  );
}

export default function App() {
  return (
    <div className="h-[2373px] w-[1080px] overflow-hidden bg-white font-['Inter','Noto_Sans_CJK_SC',sans-serif]">
      <StatusBar />
      <Header />
      <Quote />
      <div className="h-6 bg-[#f4f4f4]" />
      <Tabs />
      <MaBar />
      <div className="relative flex h-[1260px] justify-between pr-[18px] pl-[14px]">
        <LeftCharts />
        <CostPanel />
        <div className="absolute top-[588px] left-[672px] flex h-[72px] w-9 items-center justify-center rounded-l-lg bg-black/20">
          <svg viewBox="0 0 16 20" className="h-5 w-4" fill="#fff">
            <path d="M0 0l16 10L0 20z" />
          </svg>
        </div>
      </div>
      <ToolRow />
      <BottomBar />
    </div>
  );
}
